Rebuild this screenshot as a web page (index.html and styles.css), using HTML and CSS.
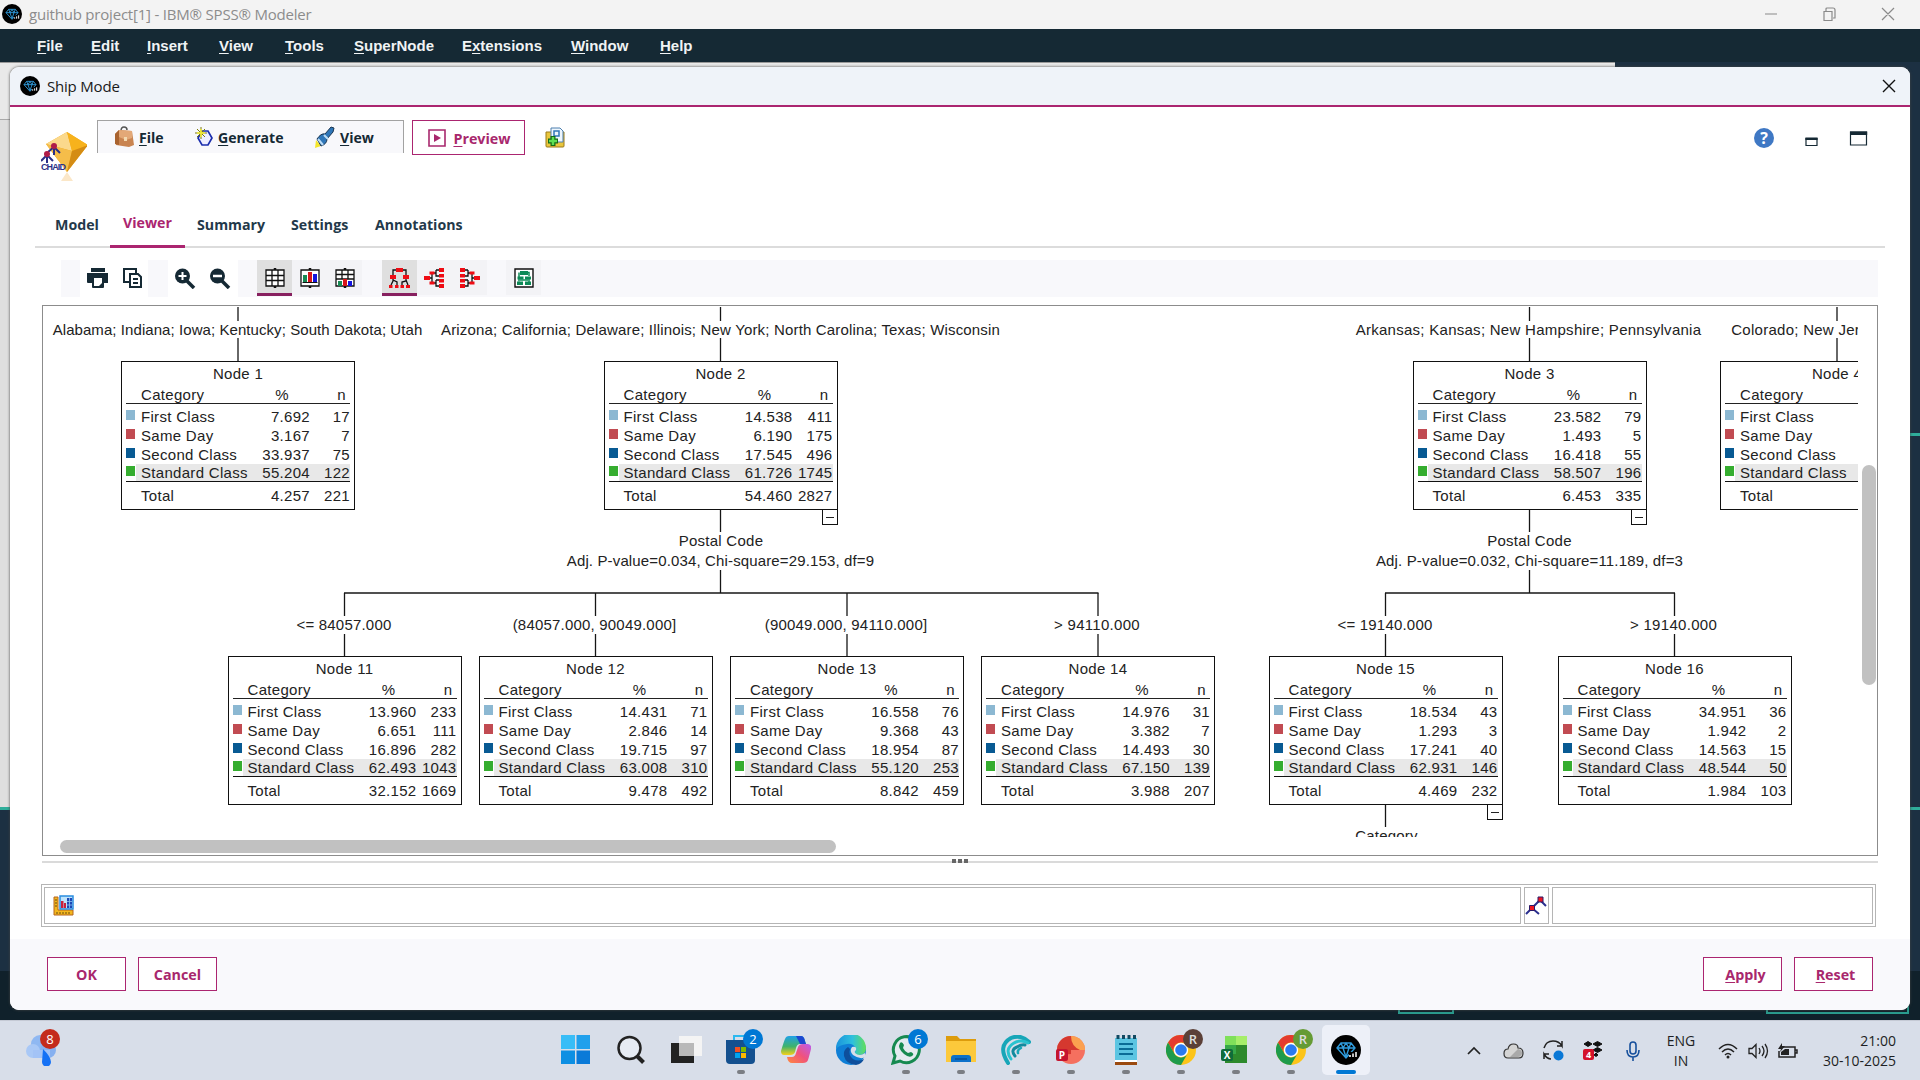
FILE: index.html
```html
<!DOCTYPE html>
<html lang="en">
<head>
<meta charset="utf-8">
<title>IBM SPSS Modeler</title>
<link rel="stylesheet" href="styles.css">
</head>
<body>
<svg class="defs" width="0" height="0">
  <defs>
    <symbol id="gem" viewBox="0 0 30 30">
      <circle cx="15" cy="15" r="15" fill="#000"/>
      <path d="M10 8h10l4 5-9 10-9-10zM6 13h18M10 8l2 5 3 9M20 8l-2 5-3 9M12 13l3-5 3 5" fill="none" stroke="#2f9bdc" stroke-width="1.4"/>
      <path d="M18 17h8v6h-8z" fill="#000"/>
      <path d="M19 22v-2M22 22v-3.500M25 22v-5" stroke="#fff" stroke-width="1.500"/>
    </symbol>
    <symbol id="chrome" viewBox="0 0 30 30">
      <circle cx="15" cy="15" r="15" fill="#fcc419"/>
      <path d="M2 7.500A15 15 0 0 1 28 7.500H15a7.500 7.500 0 0 0-6.500 11.300z" fill="#e33b2e"/>
      <path d="M2 7.500L8.500 18.800A7.500 7.500 0 0 0 21.500 18.800L15 30A15 15 0 0 1 2 7.500z" fill="#1e9b4b"/>
      <circle cx="15" cy="15" r="7.200" fill="#fff"/><circle cx="15" cy="15" r="5.800" fill="#2a7af0"/>
    </symbol>
  </defs>
</svg>

<header class="app-title">
  <svg width="20" height="20"><use href="#gem"/></svg>
  <span class="app-name">guithub project[1] - IBM® SPSS® Modeler</span>
  <svg class="win-controls" width="132" height="16" fill="none" stroke="#8a8a8a" stroke-width="1.200"><path d="M1 8h12M60 5.500h8v9h-8zM62 5V3q0-1 1-1h6q2 0 2 2v8h-2M118 2l12 12M130 2l-12 12"/></svg>
</header>
<nav class="menubar">
  <span><u>F</u>ile</span><span><u>E</u>dit</span><span><u>I</u>nsert</span><span><u>V</u>iew</span><span><u>T</u>ools</span><span><u>S</u>uperNode</span><span>E<u>x</u>tensions</span><span><u>W</u>indow</span><span><u>H</u>elp</span>
</nav>

<main class="desktop">
  <div class="sheet"></div>
  <div class="wire wire-left"></div><div class="wire wire-right-a"></div><div class="wire wire-right-b"></div>
  <div class="stub stub-a"></div><div class="stub stub-b"></div>

  <section class="dialog">
    <div class="dialog-title">
      <svg width="20" height="20"><use href="#gem"/></svg>
      <span class="dialog-name">Ship Mode</span>
      <svg class="dialog-close" width="14" height="14" stroke="#111" stroke-width="1.400"><path d="M1 1l12 12M13 1L1 13"/></svg>
    </div>

    <div class="command-row">
      <svg class="chaid" width="46" height="52" viewBox="0 0 46 52">
        <path d="M26 1L5 13 26 41 47 14z" fill="#f0a818"/><path d="M26 1L5 13 31 20z" fill="#fbd98c"/><path d="M26 1L31 20 47 14z" fill="#f7b21c"/><path d="M5 13l26 7-5 21z" fill="#f5bd4a"/><path d="M31 20l16-6-21 27z" fill="#d48c14"/>
        <path d="M26 41l6 9H20z" fill="#fbe7c8"/>
        <path d="M13 16l-6 5M13 16l6 6M13 16v8M6 24l-6 6M6 24l6 6M6 24v8" stroke="#2b2f86" stroke-width="2" fill="none"/>
        <circle cx="13" cy="15" r="3" fill="#b01c48"/><circle cx="6" cy="23" r="3" fill="#b01c48"/>
        <text x="0" y="39" class="chaid-text" textLength="25">CHAID</text>
      </svg>
      <div class="menu-group">
        <span class="cmd cmd-file"><svg width="20" height="22" viewBox="0 0 20 22"><path d="M7 5q0-4 3-4t3 3" fill="none" stroke="#555" stroke-width="1.500"/><path d="M1 8l4-4 13 1 2 14-5 2-13-2z" fill="#c98450"/><path d="M5 4l13 1v7l-6 2-7-3z" fill="#e3a877"/><path d="M1 8l4-4v15l-4-1z" fill="#a9632f"/><path d="M10 11h3v4h-3z" fill="#f3d9b0"/></svg><b><u>F</u>ile</b></span>
        <span class="cmd cmd-generate"><svg width="18" height="20" viewBox="0 0 18 20"><path d="M7 4h6l4 7-4 7H7l-4-7z" fill="#eef" stroke="#1c2fae" stroke-width="1.700"/><path d="M6 0v12M0 6h12M2 2l8 8M10 2l-8 8" stroke="#7b7b10" stroke-width="1"/><path d="M6 2v8M2 6h8" stroke="#f8ee30" stroke-width="1.600"/></svg><b><u>G</u>enerate</b></span>
        <span class="cmd cmd-view"><svg width="20" height="22" viewBox="0 0 20 22"><path d="M1 14l5 6-6 2z" fill="#f5e62c"/><path d="M2 13q4-6 8-5l6-7 3 1-1 4-6 7q0 5-6 7z" fill="#2f76b8" stroke="#1b3550"/><path d="M3 13l5 6M9 9l4 4" stroke="#bcdcf5" stroke-width="2"/></svg><b><u>V</u>iew</b></span>
      </div>
      <button class="btn preview"><svg width="18" height="18" fill="none" stroke="#a8276d" stroke-width="1.600"><path d="M1 1h16v16H1z"/><path d="M6 5l7 4-7 4z" fill="#a8276d" stroke="none"/></svg><b><u>P</u>review</b></button>
      <svg class="add-icon" width="20" height="21" viewBox="0 0 20 21"><path d="M1 5h18v14q0 1-1 1H2q-1 0-1-1z" fill="#e9c63c" stroke="#9b7a1a"/><path d="M6 1h9l3 3v11H6z" fill="#eef6fd" stroke="#4c7fae"/><path d="M9 4h5v5H9z" fill="none" stroke="#2f76b8" stroke-width="1.500"/><path d="M8 9v10M3 14h10" stroke="#146a17" stroke-width="5"/><path d="M8 10v8M4 14h8" stroke="#5ee052" stroke-width="2.500"/></svg>
      <svg class="panel-controls" width="114" height="24"><circle cx="10" cy="12" r="10" fill="#3f78c4"/><text x="10" y="18" class="help-text" text-anchor="middle">?</text><path d="M52 12.500h11v7H52zM96.500 6h16v13h-16z" fill="none" stroke="#152934" stroke-width="1.200"/><path d="M51.400 11.500h12.200v2.500H51.400zM96 5.400h17.200v3.600H96z" fill="#152934"/></svg>
    </div>

    <nav class="tabs"><span>Model</span><span class="active">Viewer</span><span>Summary</span><span>Settings</span><span>Annotations</span></nav>

    <div class="toolbar">
      <div class="tools tools-plain">
        <svg width="22" height="20" viewBox="0 0 22 20" fill="#152934"><path d="M4 0h14v4H4zM0 5h21v10h-4v4q0 1-1 1H6q-1 0-1-1v-4H1q-1 0-1-1z"/><path d="M7 10h8v5l-3 3H7z" fill="#fff"/></svg>
        <svg width="19" height="20" viewBox="0 0 19 20" fill="none" stroke="#152934" stroke-width="2"><path d="M13 6V1H1v13h5"/><path d="M7 6h8l3 3v10H7z" fill="#fff"/><path d="M10 11h5M10 15h5"/></svg>
      </div>
      <div class="tools tools-plain tools-zoom">
        <svg width="22" height="21" viewBox="0 0 22 21"><path d="M12 12l8 8" stroke="#152934" stroke-width="3.500"/><circle cx="8.500" cy="8" r="7.500" fill="#152934"/><path d="M4.500 8h8M8.500 4v8" stroke="#fff" stroke-width="2"/></svg>
        <svg width="22" height="21" viewBox="0 0 22 21"><path d="M12 12l8 8" stroke="#152934" stroke-width="3.500"/><circle cx="8.500" cy="8" r="7.500" fill="#152934"/><path d="M4 8h9" stroke="#fff" stroke-width="2.500"/></svg>
      </div>
      <div class="tools tools-tint tools-display">
        <span class="tool on"><svg width="20" height="20" viewBox="0 0 20 20" fill="none" stroke="#111" stroke-width="1.300"><path d="M1 2h18v16H1z" fill="#fff"/><path d="M1 7.500h18M1 12.500h18M7 2v16M13 2v16"/><path d="M10 0v2M10 18v2" stroke-width="2.500"/></svg></span>
        <span class="tool"><svg width="20" height="20" viewBox="0 0 20 20"><path d="M1 2h18v16H1z" fill="#fff" stroke="#111" stroke-width="1.300"/><path d="M10 0v2M10 18v2" stroke="#111" stroke-width="2.500"/><path d="M3 7h4v7H3z" fill="#198a55"/><path d="M8 4h4v10H8z" fill="#d8161b"/><path d="M13 6h4v8h-4z" fill="#1414dd"/><path d="M2.500 14.500h15" stroke="#111"/></svg></span>
        <span class="tool"><svg width="20" height="20" viewBox="0 0 20 20"><path d="M1 2h18v16H1zM1 6.500h18M1 11h18M7 2v9M13 2v9" fill="#fff" stroke="#111" stroke-width="1.300"/><path d="M10 0v2M10 18v2" stroke="#111" stroke-width="2.500"/><path d="M3 13h4v5H3z" fill="#198a55"/><path d="M8 11h4v7H8z" fill="#d8161b"/><path d="M13 13h4v5h-4z" fill="#1414dd"/></svg></span>
      </div>
      <div class="tools tools-tint tools-orient">
        <span class="tool on"><svg width="21" height="20" viewBox="0 0 21 20"><path d="M10 2H4v6M10 2h7v6M4 8v5l-2 4M4 12l4 2v3M17 8v5l-4 1v3M17 12l2 5" fill="none" stroke="#111" stroke-width="1.300"/><path d="M7 0h7v4H7zM1 7h6v4H1zM14 7h6v4h-6zM0 17h3.500v3H0zM6 17h3.500v3H6zM11.500 17h3.500v3h-3.500zM17 17h4v3h-4z" fill="#ef0c14"/></svg></span>
        <span class="tool"><svg width="21" height="20" viewBox="0 0 21 20"><path d="M3 10h5M8 5v10M8 5h4M8 15h4M12 2h5M12 2v6h5M12 12h5M12 12v6h5" fill="none" stroke="#111" stroke-width="1.300"/><path d="M0 8h6v4H0zM5.500 3.500h5v3h-5zM5.500 13.500h5v3h-5zM15 0h5v4h-5zM15 6h5v3.500h-5zM15 11h5v3.500h-5zM15 16h5v4h-5z" fill="#ef0c14"/></svg></span>
        <span class="tool"><svg class="flip" width="21" height="20" viewBox="0 0 21 20"><path d="M3 10h5M8 5v10M8 5h4M8 15h4M12 2h5M12 2v6h5M12 12h5M12 12v6h5" fill="none" stroke="#111" stroke-width="1.300"/><path d="M0 8h6v4H0zM5.500 3.500h5v3h-5zM5.500 13.500h5v3h-5zM15 0h5v4h-5zM15 6h5v3.500h-5zM15 11h5v3.500h-5zM15 16h5v4h-5z" fill="#ef0c14"/></svg></span>
      </div>
      <div class="tools tools-tint tools-map">
        <span class="tool"><svg width="20" height="20" viewBox="0 0 20 20"><path d="M1 1h18v18H1z" fill="#fff" stroke="#111" stroke-width="1.400"/><path d="M6 3h8v4H6zM3.500 8.500h6v3h-6zM11 8.500h6v3h-6zM3 13.500h6v3.500H3zM11 13.500h6v3.500h-6z" fill="#0d8a57"/><path d="M5 4.500v9M15 9v5M13 4.500h2V8M6 12h8" stroke="#0d8a57" stroke-width="1.500" fill="none"/></svg></span>
      </div>
    </div>

    <div class="viewer">
      <div class="canvas" id="canvas"></div>
      <div class="vbar"><i></i></div>
      <div class="hbar"><i></i></div>
    </div>
    <div class="splitter"><i></i><i></i><i></i></div>

    <div class="fields">
      <div class="field field-main"><svg width="21" height="21" viewBox="0 0 21 21"><path d="M1 2h4v13h15v5H1z" fill="#f3b71d" stroke="#b5651d"/><path d="M7 1h13v13H7z" fill="#bfe3fb" stroke="#2a8de0" stroke-width="1.500"/><path d="M8 6h2.500v7H8zM11 8h2v5h-2z" fill="#c9203c"/><path d="M14 3h5v10h-5z" fill="#1d47b5"/><path d="M14 6.500h5M14 10h5M16.500 3v10" stroke="#8fc4ee" stroke-width=".8"/><path d="M4 17v2M7 17v2M10 17v2M13 17v2M16 17v2M2 5h2M2 8h2M2 11h2" stroke="#6b4a10"/></svg></div>
      <div class="field field-icon"><svg width="22" height="20" viewBox="0 0 22 20"><path d="M1 18l6-6 7 6M8 11l7-7 6 6" fill="none" stroke="#2a2f8f" stroke-width="2"/><path d="M4.500 9.500h5v5h-5zM13 1h5v5h-5z" fill="#ef1620" stroke="#2a1a6a"/></svg></div>
      <div class="field field-side"></div>
    </div>

    <footer class="actions">
      <button class="btn ok"><b>OK</b></button><button class="btn cancel"><b>Cancel</b></button>
      <button class="btn apply"><b><u>A</u>pply</b></button><button class="btn reset"><b><u>R</u>eset</b></button>
    </footer>
  </section>
</main>

<footer class="taskbar">
  <div class="weather"><svg width="30" height="34" viewBox="0 0 30 34"><circle cx="14" cy="12" r="9" fill="#8fb8f2"/><circle cx="7" cy="19" r="7" fill="#a9c8f6"/><circle cx="22" cy="18" r="8" fill="#86b0f0"/><path d="M7 18h17v8H7z" fill="#a3c3f6"/><path d="M17 17q8 8 8 13a4.500 4.500 0 0 1-9 0z" fill="#1672f5"/></svg><span class="badge red">8</span></div>
  <div class="task-icons">
    <span class="task"><svg width="30" height="30"><path d="M0 0h14v14H0z" fill="#38bdf7"/><path d="M15.500 0H29v14H15.500z" fill="#20a0ec"/><path d="M0 15.500h14V29H0z" fill="#0d8fe3"/><path d="M15.500 15.500H29V29H15.500z" fill="#0a7ad8"/></svg></span>
    <span class="task"><svg width="30" height="30" fill="none" stroke="#222"><circle cx="13.500" cy="13" r="11" stroke-width="2.500" fill="#e6ebf3"/><path d="M20.500 20.500l7 7" stroke-width="4"/></svg></span>
    <span class="task"><svg width="31" height="30"><path d="M0 8h23v20H0z" fill="#222"/><path d="M8 1h23v20H8z" fill="#f4f4f4"/><path d="M8 8h15v13H8z" fill="#b9b9b9"/></svg></span>
    <span class="task run"><svg width="30" height="30"><path d="M8 6V1h12v5" fill="none" stroke="#2bb9f0" stroke-width="2"/><path d="M0 5h29v20q0 4-4 4H4q-4 0-4-4z" fill="#14508f"/><path d="M9 12h5v5H9z" fill="#f25022"/><path d="M15 12h5v5h-5z" fill="#7fba00"/><path d="M9 18h5v5H9z" fill="#00a4ef"/><path d="M15 18h5v5h-5z" fill="#ffb900"/></svg><span class="badge blue">2</span></span>
    <span class="task"><svg width="30" height="30" viewBox="0 0 30 30"><defs><linearGradient id="cop1" x1="0" y1="0" x2="0" y2="1"><stop offset="0" stop-color="#1fa1e8"/><stop offset=".55" stop-color="#3fb36b"/><stop offset="1" stop-color="#f5d019"/></linearGradient><linearGradient id="cop2" x1="0" y1="1" x2="1" y2="0"><stop offset="0" stop-color="#ff8a3c"/><stop offset=".5" stop-color="#f0527d"/><stop offset="1" stop-color="#b95df0"/></linearGradient></defs><path d="M8 1h12q3 0 4 5l1 3h-6q-3 0-4 4l-1 4q-1 3-5 3H3q-3 0-3-4 3-10 4-12 1-3 4-3z" fill="url(#cop1)"/><path d="M15 1h5q3 0 4 5l1 3h-6z" fill="#1b48d0"/><path d="M22 28H11q-4 0-5-6h5q3 0 4-4l2-6q1-3 5-3h5q4 1 3 5-2 8-3 11-1 3-5 3z" fill="url(#cop2)"/></svg></span>
    <span class="task"><svg width="30" height="30" viewBox="0 0 30 30"><defs><linearGradient id="edg"><stop offset="0" stop-color="#1a93dd"/><stop offset=".55" stop-color="#2fc0dd"/><stop offset="1" stop-color="#62df5a"/></linearGradient></defs><circle cx="15" cy="15" r="15" fill="#0f7fd6"/><path d="M0 14A15 15 0 0 1 30 13q0 7-7 7-5 0-5-2 3-3 1-6-3-4-8-3Q3 10 0 14z" fill="url(#edg)"/><path d="M12 12q-5 3-4 9 2 8 12 9 6-1 8-6-6 3-11 0-5-4-3-10z" fill="#0e4f9c"/><path d="M17 20q-4-4-1-8 5-1 4 3-2 2-1 3 4 4 10 0l1 4q-6 3-13-2z" fill="#d8dee9"/></svg></span>
    <span class="task run"><svg width="30" height="30" viewBox="0 0 30 30"><path d="M2 28l2-7A13 13 0 1 1 9 26z" fill="#e3ebf0" stroke="#168a50" stroke-width="3"/><path d="M9 8q2-2 4 2l-1 3q2 4 5 5l3-1q4 2 1 4-3 2-8-2Q6 13 9 8z" fill="#168a50"/></svg><span class="badge blue">6</span></span>
    <span class="task run"><svg width="30" height="30"><path d="M0 1h11l3 3h16v5H0z" fill="#dd9c0c"/><path d="M0 6h30v21H0z" fill="#fcc93b"/><path d="M5 27v-4q0-3 3-3h14q3 0 3 3v4z" fill="#0c71ca"/><path d="M9 24h12" stroke="#084f96" stroke-width="1.500"/></svg></span>
    <span class="task run"><svg width="30" height="30" viewBox="0 0 30 30" fill="none" stroke-linecap="round"><path d="M7 28Q-4 11 10 3q10-4 18 4" stroke="#17a6b8" stroke-width="4"/><path d="M10 24Q3 14 13 8q7-4 14 0" stroke="#29c3cf" stroke-width="3"/><path d="M14 21Q9 15 16 12q5-3 8-2" stroke="#128a9e" stroke-width="3"/><path d="M17 18q-1-3 3-5" stroke="#17a6b8" stroke-width="2.500"/></svg></span>
    <span class="task run"><svg width="30" height="30"><circle cx="15" cy="15" r="14" fill="#f5705f"/><path d="M15 1a14 14 0 0 1 14 14H15z" fill="#fba04f"/><path d="M15 1A14 14 0 0 0 1 15l1 5 13-1V15h9q-9-4-9-14z" fill="#d5382f"/><rect x="0" y="14" width="12" height="12" rx="2" fill="#c5152f"/><text x="6" y="24" text-anchor="middle" class="app-letter">P</text></svg></span>
    <span class="task run"><svg width="24" height="30"><path d="M1 3h22v23H1z" fill="#5cc5e2"/><path d="M1 26h22v4H1z" fill="#9a4a10"/><path d="M1 25h22v2H1z" fill="#fff"/><path d="M5 9h14M5 14h14M5 19h14" stroke="#0a6c96" stroke-width="2"/><path d="M4 0v4M9.500 0v4M15 0v4M20.500 0v4" stroke="#114a63" stroke-width="3"/></svg></span>
    <span class="task run"><svg width="30" height="30"><use href="#chrome"/></svg><span class="badge brown">R</span></span>
    <span class="task run"><svg width="30" height="30"><path d="M4 1h22v27H4z" fill="#2d8a2c"/><path d="M4 1h11v9H4z" fill="#7fe05a"/><path d="M15 1h11v9H15z" fill="#a6ee6a"/><path d="M4 10h11v9H4z" fill="#36a848"/><rect x="0" y="14" width="12" height="12" rx="2" fill="#0f6b3a"/><text x="6" y="24" text-anchor="middle" class="app-letter">X</text></svg></span>
    <span class="task run"><svg width="30" height="30"><use href="#chrome"/></svg><span class="badge green">R</span></span>
    <span class="task current"><svg width="30" height="30"><use href="#gem"/></svg></span>
  </div>
  <div class="tray">
    <svg width="14" height="9" fill="none" stroke="#222" stroke-width="1.700"><path d="M1 8l6-6 6 6"/></svg>
    <svg width="21" height="16" viewBox="0 0 21 16"><path d="M5 15q-4 0-4-4.500T5 6q1-5 5.500-5T15 5q5 0 5 5t-4 5z" fill="#d4d4d4" stroke="#333" stroke-width="1.200"/><path d="M7 14L15 6q4 1 4 4t-4 4z" fill="#a9a9a9"/></svg>
    <svg width="21" height="21" viewBox="0 0 21 21" fill="none" stroke="#222" stroke-width="1.500"><path d="M1 8Q3 1 10 1q6 0 9 5V1M19 6h-5M8 19q-4 0-7-5v5M1 14h5"/><circle cx="15.500" cy="15.500" r="5" fill="#0a78d6" stroke="none"/></svg>
    <svg width="20" height="20" viewBox="0 0 20 20"><path d="M1 3l4-2.500L9 3 5 5.500zM10 3l4.500-2.500L19 3l-4.500 2.500zM10 9l4.500-2.500L19 9l-4.500 2.500zM11 14l2-2 2 2-2 1.500z" fill="#111" stroke="#111"/><rect x="0" y="8" width="11" height="11" rx="2" fill="#d4112b"/><text x="5.500" y="17" text-anchor="middle" class="drop-text">4</text></svg>
    <svg width="14" height="20" fill="none" stroke="#17509c" stroke-width="1.600"><rect x="4" y="1" width="6" height="12" rx="3"/><path d="M1 9q0 7 6 7t6-7M7 16v4"/></svg>
    <div class="lang"><span>ENG</span><span>IN</span></div>
    <svg width="20" height="16" viewBox="0 0 20 16" fill="none" stroke="#222" stroke-width="1.500"><path d="M1 6q9-9 18 0M4 9q6-6 12 0M7 12q3-3 6 0"/><circle cx="10" cy="14" r="1.500" fill="#222" stroke="none"/></svg>
    <svg width="21" height="16" viewBox="0 0 21 16" fill="none" stroke="#222" stroke-width="1.300"><path d="M1 5.500h3l4-4v13l-4-4H1zM11 5q2 3 0 6M14 3q4 5 0 10M17 1q5 7 0 14"/></svg>
    <svg width="20" height="15" viewBox="0 0 20 15"><path d="M2 4h15v10H1V8M17.500 7h1.500v3h-1.500" fill="none" stroke="#222" stroke-width="1.500"/><path d="M3 12V9l4-3h4v6z" fill="#222"/><path d="M4 0L0 6h3L2 9l5-6H4z" fill="#222"/></svg>
    <div class="clock"><span>21:00</span><span>30-10-2025</span></div>
  </div>
</footer>
<script src="tree.js"></script>
</body>
</html>
```
FILE: tree.js
```js
const ORIGIN_X = 44, ORIGIN_Y = 307;
const ROWS = ["First Class", "Same Day", "Second Class", "Standard Class"];
const TOP = 361, LOW = 656;

const nodes = [
  [1, 121, TOP, ["7.692", "3.167", "33.937", "55.204", "4.257"], [17, 7, 75, 122, 221], false],
  [2, 603.5, TOP, ["14.538", "6.190", "17.545", "61.726", "54.460"], [411, 175, 496, 1745, 2827], true],
  [3, 1412.5, TOP, ["23.582", "1.493", "16.418", "58.507", "6.453"], [79, 5, 55, 196, 335], true],
  [4, 1720, TOP, ["", "", "", "", ""], ["", "", "", "", ""], false],
  [11, 227.5, LOW, ["13.960", "6.651", "16.896", "62.493", "32.152"], [233, 111, 282, 1043, 1669], false],
  [12, 478.5, LOW, ["14.431", "2.846", "19.715", "63.008", "9.478"], [71, 14, 97, 310, 492], false],
  [13, 730, LOW, ["16.558", "9.368", "18.954", "55.120", "8.842"], [76, 43, 87, 253, 459], false],
  [14, 981, LOW, ["14.976", "3.382", "14.493", "67.150", "3.988"], [31, 7, 30, 139, 207], false],
  [15, 1268.5, LOW, ["18.534", "1.293", "17.241", "62.931", "4.469"], [43, 3, 40, 146, 232], true],
  [16, 1557.5, LOW, ["34.951", "1.942", "14.563", "48.544", "1.984"], [36, 2, 15, 50, 103], false]
];

/* x centre, y centre, text, tracking */
const labels = [
  [237.5, 328.5, "Alabama; Indiana; Iowa; Kentucky; South Dakota; Utah", .07],
  [720.5, 328.5, "Arizona; California; Delaware; Illinois; New York; North Carolina; Texas; Wisconsin", .17],
  [1528.5, 328.5, "Arkansas; Kansas; New Hampshire; Pennsylvania", .27],
  [1838, 328.5, "Colorado; New Jersey; Oregon", .27],
  [721, 539.5, "Postal Code", .25], [720.5, 560, "Adj. P-value=0.034, Chi-square=29.153, df=9", .14],
  [1529.5, 539.5, "Postal Code", .25], [1529.5, 560, "Adj. P-value=0.032, Chi-square=11.189, df=3", .16],
  [344, 624, "<= 84057.000", .2], [594.5, 624, "(84057.000, 90049.000]", .2],
  [846, 624, "(90049.000, 94110.000]", .2], [1097, 624, "> 94110.000", .3],
  [1385, 624, "<= 19140.000", .2], [1673.5, 624, "> 19140.000", .3],
  [1386.5, 835, "Category", .2]
];

const lines = [];
for (const x of [238, 720.5, 1529.5, 1837]) lines.push([x, 300, x, 321], [x, 338, x, 362]);
for (const x of [720.5, 1529.5]) lines.push([x, 510, x, 532], [x, 570, x, 593]);
for (const x of [344.5, 595.5, 847, 1098, 1385.5, 1674.5]) lines.push([x, 593, x, 616], [x, 634, x, 657]);
lines.push([344, 593, 1098.5, 593], [1385, 593, 1675, 593], [1385.5, 805, 1385.5, 827]);

const px = v => v + "px";
const nodeHtml = ([id, x, y, pct, n, open]) => `
  <article class="node" style="left:${px(x - ORIGIN_X)};top:${px(y - ORIGIN_Y)}">
    <h4>Node ${id}</h4>
    <div class="head"><span>Category</span><span>${"%"}</span><span>n</span></div>
    <div class="rows">${ROWS.map((r, i) => `<div class="row c${i}"><i></i><span>${r}</span><span>${pct[i]}</span><span>${n[i]}</span></div>`).join("")}</div>
    <div class="row total"><i></i><span>Total</span><span>${pct[4]}</span><span>${n[4]}</span></div>
    ${open ? '<em class="collapse"></em>' : ""}
  </article>`;

document.getElementById("canvas").innerHTML =
  `<svg class="links" viewBox="${ORIGIN_X} ${ORIGIN_Y} 1814 530" width="1814" height="530">${
    lines.map(l => `<path d="M${l[0]} ${l[1]}L${l[2]} ${l[3]}"/>`).join("")}</svg>` +
  labels.map(([x, y, t, s]) => `<span class="label" style="left:${px(x - ORIGIN_X)};top:${px(y - ORIGIN_Y)};letter-spacing:${px(s)}">${t.replace(/</g, "&lt;")}</span>`).join("") +
  nodes.map(nodeHtml).join("");
```
FILE: styles.css
```css
* { box-sizing: border-box; }
body { margin: 0; width: 1920px; height: 1080px; overflow: hidden; display: flex; flex-direction: column; font-family: "Open Sans", sans-serif; background: #101f28; }
svg { display: block; flex: none; }
.defs { position: absolute; }
b { font-weight: 700; }
u { text-decoration: underline; text-underline-offset: 2px; }

.app-title { height: 29px; flex: none; display: flex; align-items: center; padding: 0 24px 1px 2px; background: #f3f3f3; color: #8c8c8c; }
.app-name { margin-left: 7px; font-size: 15px; letter-spacing: -.2px; white-space: nowrap; }
.win-controls { margin-left: auto; width: 132px; }
.menubar { height: 33px; flex: none; display: grid; grid-template-columns: 54px 56px 72px 66px 69px 108px 109px 89px 60px; padding-left: 37px; align-items: center; background: #152934; color: #f0f3f5; font: 700 15px "Liberation Sans", sans-serif; }

.desktop { position: relative; height: 958px; flex: none; background: linear-gradient(#1c3042 0 909px, #10212b 909px); }
.sheet { width: 1615px; height: 745px; background: linear-gradient(#e9e9e9 0 56px, #a9a9a9 56px 57px, #dfdfdf 57px); border-top: 1px solid #999; }
.wire { position: absolute; height: 3px; background: #2fae9b; }
.wire-left { left: 0; top: 745px; width: 10px; }
.wire-right-a { right: 0; top: 371px; width: 10px; }
.wire-right-b { right: 0; top: 745px; width: 10px; }
.stub { position: absolute; top: 940px; height: 12px; border: 2px solid #2a9c8e; }
.stub-a { left: 1398px; width: 56px; }
.stub-b { left: 1766px; width: 143px; }

.dialog { position: absolute; left: 10px; top: 5px; width: 1900px; height: 943px; border-radius: 9px; overflow: hidden; background: #fff; display: flex; flex-direction: column; box-shadow: 0 0 3px #444; }
.dialog-title { height: 40px; flex: none; display: flex; align-items: center; padding: 0 14px 1px 10px; background: #eff3f9; border-bottom: 2px solid #ab2570; color: #1a1a1a; }
.dialog-name { margin-left: 7px; font-size: 15px; letter-spacing: -.2px; }
.dialog-close { margin-left: auto; }

.command-row { height: 93px; flex: none; display: flex; align-items: flex-start; padding: 13px 42px 0 31px; }
.chaid { margin-top: 11px; }
.chaid-text { font: 700 9px "Liberation Sans", sans-serif; fill: #2b2f86; }
.menu-group { width: 307px; height: 33px; margin-left: 10px; display: flex; align-items: center; background: #f8f8fb; border: 1px solid #a2a2a2; border-bottom: 0; color: #152934; }
.cmd { display: flex; align-items: center; gap: 5px; font-size: 14.1px; }
.cmd-file { margin-left: 16px; width: 81px; }
.cmd-generate { width: 120px; }
.btn { display: flex; align-items: center; justify-content: center; padding: 0; border: 1px solid #ab2570; background: #fff; color: #a8276d; font: 14.3px "Open Sans", sans-serif; }
.preview { width: 113px; height: 35px; margin-left: 8px; padding: 1px 0 0 2px; gap: 7px; }
.add-icon { margin: 7px 0 0 20px; }
.panel-controls { margin: 6px 0 0 auto; }
.help-text { font: 700 16px "Open Sans", sans-serif; fill: #fff; }

.tabs { height: 48px; flex: none; margin: 0 25px; display: grid; grid-template-columns: 75px 75px 94px 84px 100px; border-bottom: 2px solid #dcdcdc; color: #23394a; font-size: 14.2px; font-weight: 700; line-height: 50px; }
.tabs span { padding-left: 12px; height: 48px; }
.tabs span:first-child { padding-left: 20px; }
.tabs .active { color: #ab2570; border-bottom: 3px solid #ab2570; line-height: 45px; padding-left: 13px; }

.toolbar { height: 37px; flex: none; margin: 12px 32px 0 51px; display: flex; background: #f8f8fb; }
.tools { display: flex; align-items: center; height: 35px; }
.tools-plain { background: #fff; width: 68px; margin-left: 19px; padding-left: 7px; gap: 14px; height: 37px; padding-bottom: 1px; }
.tools-zoom { width: 70px; margin-left: 20px; padding-left: 6px; gap: 13px; }
.tools-tint { background: #f3f3f6; }
.tools-display { margin-left: 19px; }
.tools-orient { margin-left: 20px; }
.tools-map { margin-left: 19px; }
.tool { width: 35px; height: 36px; display: grid; place-items: center; }
.tool.on { background: #dfdfdf; border-bottom: 3px solid #87205f; padding-top: 3px; }
.flip { transform: scaleX(-1); }

.viewer { height: 551px; flex: none; margin: 8px 32px 0 32px; padding: 1px; border: 1px solid #8c8c8c; display: grid; grid-template: 530px 1fr / 1814px 1fr; }
.canvas { position: relative; overflow: hidden; font: 15px "Liberation Sans", Arial, sans-serif; letter-spacing: .3px; color: #222; }
.vbar i { display: block; width: 14px; height: 220px; margin: 158px 0 0 4px; border-radius: 7px; background: #c1c1c1; }
.hbar i { display: block; width: 776px; height: 13px; margin: 3px 0 0 16px; border-radius: 7px; background: #c1c1c1; }
.links { position: absolute; left: 0; top: 0; }
.links path { stroke: #161616; stroke-width: 1.300; }
.label { position: absolute; transform: translate(-50%, -50%); white-space: nowrap; line-height: 17px; }
.node { position: absolute; width: 234px; height: 149px; border: 1px solid #111; padding: 1px 4px 0 4px; background: #fff; }
.node h4 { margin: 0; font-size: 15px; font-weight: 400; text-align: center; line-height: 21px; height: 22px; }
.head, .row { display: grid; grid-template-columns: 1fr 64px 36px; }
.head { padding-left: 15px; height: 19px; line-height: 20px; border-bottom: 1px solid #222; }
.head span + span { text-align: center; }
.head span:last-child { text-align: right; padding-right: 4px; }
.rows { padding-top: 4px; border-bottom: 1px solid #111; }
.row { grid-template-columns: 10px 1fr 62px 40px; height: 18.800px; line-height: 17px; }
.row span { padding-left: 5px; white-space: nowrap; }
.row span:nth-child(n+3) { text-align: right; padding: 0; }
.row i { width: 9px; height: 10px; margin-top: 2px; }
.c0 i { background: #8cb8d2; } .c1 i { background: #c14b52; } .c2 i { background: #085a93; } .c3 i { background: #35ad2f; }
.c3 { height: 17px; background: linear-gradient(to right, #fff 10px, #e8e8e8 10px); }
.total { margin-top: 5px; }
.collapse { position: absolute; right: -1px; bottom: -16px; width: 16px; height: 16px; border: 1px solid #111; background: linear-gradient(#222, #222) center / 8px 1px no-repeat; }

.splitter { height: 7px; flex: none; margin: 0 32px; border-bottom: 2px solid #dadada; display: flex; justify-content: center; gap: 2px; padding-top: 3px; }
.splitter i { width: 4px; height: 4px; background: #666; z-index: 1; }
.fields { flex: none; height: 43px; width: 1835px; margin: 21px 0 0 31px; padding: 2px; display: flex; gap: 3px; border: 1px solid #b5b5b5; }
.field { border: 1px solid #b5b5b5; height: 37px; display: flex; align-items: center; }
.field-main { width: 1477px; padding-left: 8px; }
.field-icon { width: 25px; }
.field-side { flex: 1; }
.actions { flex: 1; margin-top: 12px; padding: 18px 37px 0; display: flex; align-items: flex-start; background: #f9f9fc; }
.actions .btn { width: 79px; height: 34px; }
.actions .cancel { margin-left: 12px; }
.actions .apply { margin-left: auto; padding-left: 6px; }
.actions .reset { margin-left: 12px; padding-left: 4px; }

.taskbar { flex: none; height: 60px; display: flex; border-top: 1px solid #c5cad5; background: #d8dee9; color: #1d1f24; }
.weather { position: relative; margin: 11px 0 0 26px; width: 30px; }
.badge { position: absolute; right: -6px; top: -7px; width: 20px; height: 20px; border-radius: 50%; color: #fff; font-size: 13px; line-height: 20px; text-align: center; }
.weather .badge { right: -4px; top: -3px; }
.red { background: #c42b1c; } .blue { background: #0078d4; } .brown { background: #5b4038; } .green { background: #659b35; }
.brown, .green { font-weight: 600; color: #ddd; }
.task-icons { display: flex; margin-left: 496px; padding-top: 4px; gap: 7px; }
.task { position: relative; width: 48px; height: 50px; display: flex; justify-content: center; padding-top: 10px; border-radius: 5px; }
.task .badge { right: 2px; top: 4px; }
.run::after, .current::after { content: ""; position: absolute; bottom: 1px; left: 20px; width: 8px; height: 4px; border-radius: 2px; background: #7b7e84; }
.current { background: #edf0f8; }
.current::after { left: 14px; width: 20px; background: #0078d4; }
.app-letter { font: 700 10px "Open Sans", sans-serif; fill: #fff; }
.drop-text { font: 700 9px "Open Sans", sans-serif; fill: #fff; }
.tray { margin-left: auto; padding-right: 24px; display: grid; grid-template-columns: 36px 40px 40px 43px 38px 54px 30px 30px 42px 76px; align-items: center; }
.lang, .clock { display: flex; flex-direction: column; font-size: 14px; line-height: 20px; }
.lang { width: 34px; align-items: center; }
.clock { align-items: flex-end; white-space: nowrap; }
```
